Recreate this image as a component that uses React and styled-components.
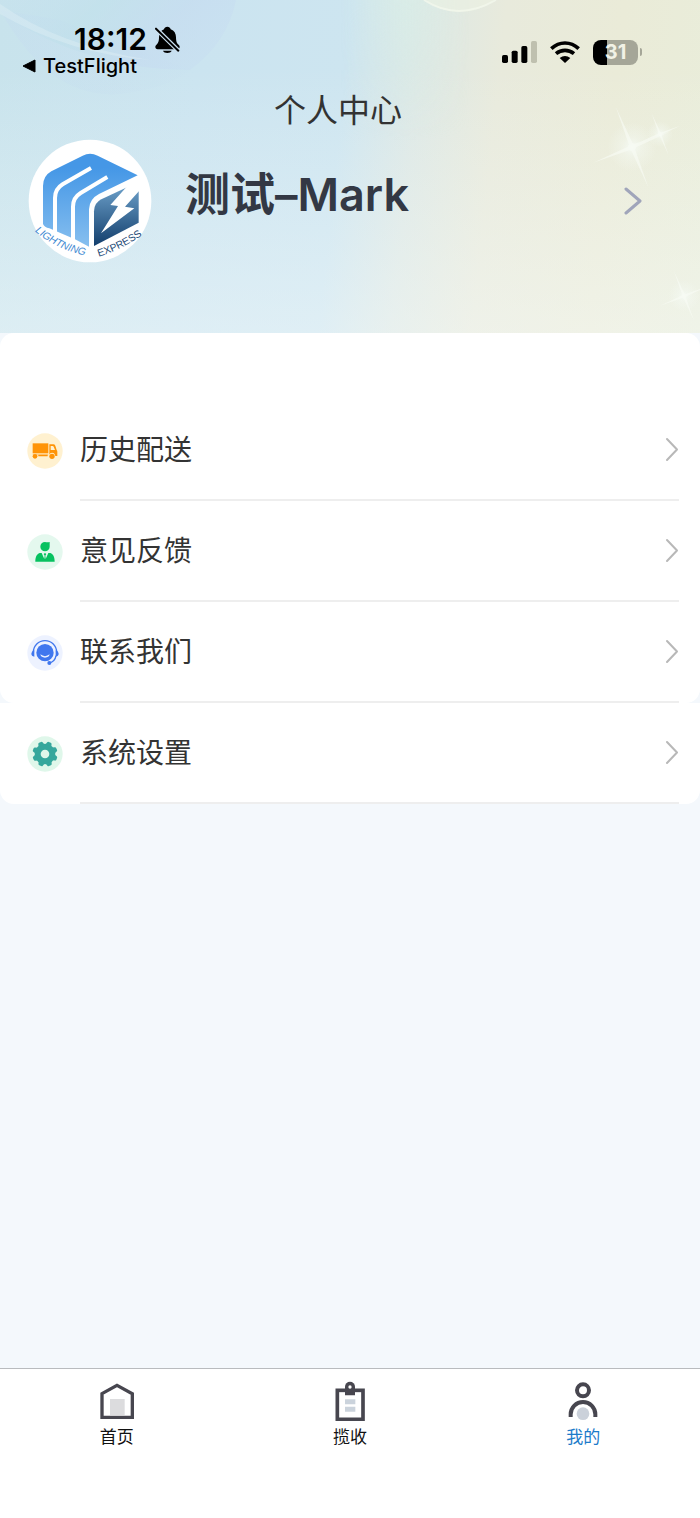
import React from "react";
import styled, { createGlobalStyle } from "styled-components";

const GlobalStyle = createGlobalStyle`
  * { box-sizing: border-box; }
  body {
    margin: 0;
    font-family: Inter, "Noto Sans CJK SC", sans-serif;
    background: #f4f8fc;
  }
  a { color: inherit; text-decoration: none; }
  svg { display: block; flex: none; }
`;

const Page = styled.div`
  min-height: 100vh;
  display: flex;
  flex-direction: column;
`;

const Header = styled.header`
  position: relative;
  overflow: hidden;
  padding: 24px 0 70px;
  background:
    linear-gradient(180deg, rgba(255, 255, 255, 0) 20%, rgba(248, 252, 252, 0.42) 100%),
    linear-gradient(96deg, #c8e3ec 0%, #cbe4f0 28%, #cde5f0 48%, #dde8e5 58%, #e8eadc 69%, #eaebd8 85%, #e9edda 100%);
`;

const Backdrop = styled.svg`
  position: absolute;
  top: 0;
  left: 0;
  width: 100%;
  height: 100%;
`;

const StatusBar = styled.div`
  position: relative;
  display: flex;
  justify-content: space-between;
  padding: 0 58px 0 22px;
  color: #000;
`;

const TimeRow = styled.div`
  display: flex;
  align-items: center;
  gap: 8px;
  height: 30px;
  padding-left: 52px;
  font-size: 30px;
  font-weight: 600;
  line-height: 30px;
`;

const BackLink = styled.a`
  display: flex;
  align-items: center;
  gap: 7px;
  height: 24px;
  font-size: 20px;
  font-weight: 500;
  line-height: 24px;
`;

const StatusIcons = styled.div`
  display: flex;
  align-items: center;
  gap: 13px;
  height: 56px;
`;

const BatteryWrap = styled.div`
  display: flex;
  align-items: center;
  gap: 2px;
`;

const Battery = styled.div`
  width: 45px;
  height: 25px;
  border-radius: 8px;
  background: linear-gradient(90deg, #000 14px, #a5a698 14px);
  color: #f1f2e6;
  font-size: 20px;
  font-weight: 700;
  line-height: 25px;
  text-align: center;
`;

const BatteryNub = styled.span`
  width: 2px;
  height: 8px;
  border-radius: 0 2px 2px 0;
  background: #a5a698;
`;

const Title = styled.h1`
  position: relative;
  margin: 9px 24px 6px 0;
  font-size: 32px;
  font-weight: 400;
  line-height: 44px;
  text-align: center;
  color: #333;
`;

const Profile = styled.a`
  position: relative;
  display: flex;
  align-items: center;
  padding: 0 58px 0 28px;
`;

const Name = styled.span`
  flex: 1;
  margin-left: 33px;
  padding-bottom: 12px;
  font-size: 45px;
  font-weight: 600;
  line-height: 56px;
  color: #333844;
`;

const Card = styled.nav`
  padding-top: ${(p) => p.$top}px;
  background: #fff;
  border-radius: ${(p) => (p.$top ? "14px" : "0 0 14px 14px")};
`;

const Row = styled.a`
  display: flex;
  align-items: center;
  gap: 17px;
  height: 101px;
  padding: 0 21px 0 27px;
`;

const RowBody = styled.span`
  flex: 1;
  display: flex;
  align-items: center;
  justify-content: space-between;
  height: 100%;
  border-bottom: 2px solid #eee;
  font-size: 28px;
  line-height: 40px;
  color: #333;
`;

const TabBar = styled.nav`
  display: flex;
  height: 150px;
  margin-top: auto;
  padding-top: 11px;
  border-top: 1px solid #b9bbbe;
  background: #fff;
`;

const Tab = styled.a`
  flex: 1;
  display: flex;
  flex-direction: column;
  align-items: center;
  gap: 4px;
  font-size: 17px;
  line-height: 24px;
  color: ${(p) => (p.$active ? "#1c7bca" : "#111")};
`;

const BellOff = () => (
  <svg width="25" height="27" viewBox="0 0 75 81" aria-hidden="true">
    <path d="M37 2c5 0 9 3 10 8 11 4 16 13 16 24 0 14 3 19 9 24 4 4 2 12-5 12H8c-7 0-9-8-5-12 6-6 9-11 9-24C12 23 17 14 27 10c1-5 5-8 10-8z" />
    <path d="M24 74h26c-3 9-23 9-26 0z" />
    <path d="M3 8l67 66" stroke="#cbe0f0" strokeWidth="13" />
    <path d="M3 8l67 66" stroke="#000" strokeWidth="6" strokeLinecap="round" />
  </svg>
);

const Signal = () => (
  <svg width="35" height="22" viewBox="0 0 105 66" aria-hidden="true">
    <rect x="0" y="42" width="18" height="24" rx="5" />
    <rect x="29" y="29" width="18" height="37" rx="5" />
    <rect x="58" y="15" width="18" height="51" rx="5" />
    <rect x="87" y="0" width="18" height="66" rx="5" fill="#bfc0af" />
  </svg>
);

const Wifi = () => (
  <svg width="30" height="22" viewBox="0 0 90 66" aria-hidden="true">
    <g fill="none" stroke="#000" strokeWidth="11">
      <path d="M4 23Q22 6 45 6t41 17" />
      <path d="M18 38Q30 28 45 28t27 10" />
    </g>
    <path d="M29 51q16-12 32 0L45 66z" />
  </svg>
);

const Chevron = ({ width, height, color, stroke }) => (
  <svg width={width} height={height} viewBox={`0 0 ${width} ${height}`} fill="none" aria-hidden="true">
    <path
      d={`M2 2L${width - 2} ${height / 2}L2 ${height - 2}`}
      stroke={color}
      strokeWidth={stroke}
      strokeLinecap="round"
      strokeLinejoin="round"
    />
  </svg>
);

const Star = ({ x, y, size }) => (
  <g transform={`translate(${x} ${y}) rotate(-22) scale(${size})`}>
    <circle r="26" fill="url(#glow)" />
    <path
      d="M0-46L2-4L4-2L44 0L4 2L2 4L0 46L-2 4L-4 2L-44 0L-4-2L-2-4z"
      fill="#f8fcf5"
      opacity="0.6"
    />
  </g>
);

const Scenery = () => (
  <Backdrop viewBox="0 0 700 333" preserveAspectRatio="none" aria-hidden="true">
    <defs>
      <radialGradient id="glow">
        <stop offset="0" stopColor="#f5faf4" stopOpacity="0.9" />
        <stop offset="0.4" stopColor="#f5faf4" stopOpacity="0.4" />
        <stop offset="1" stopColor="#f5faf4" stopOpacity="0" />
      </radialGradient>
      <linearGradient id="bubble" x1="0" x2="1" y1="0" y2="0.3">
        <stop offset="0" stopColor="#c3dff0" stopOpacity="0.2" />
        <stop offset="0.4" stopColor="#bfe0ea" stopOpacity="0.8" />
        <stop offset="0.75" stopColor="#c5dbf0" stopOpacity="0.9" />
        <stop offset="1" stopColor="#c6dcf1" stopOpacity="0.6" />
      </linearGradient>
      <linearGradient id="lens" x1="0" x2="1" y1="0" y2="0">
        <stop offset="0" stopColor="#c4dbf0" stopOpacity="0.6" />
        <stop offset="1" stopColor="#c4dbf0" stopOpacity="0.1" />
      </linearGradient>
      <linearGradient id="mint" x1="0" x2="1" y1="0" y2="0">
        <stop offset="0" stopColor="#d9efe6" stopOpacity="0" />
        <stop offset="0.5" stopColor="#d9efe6" stopOpacity="0.6" />
        <stop offset="1" stopColor="#d9efe6" stopOpacity="0" />
      </linearGradient>
      <linearGradient id="fade" x1="0" x2="0" y1="0" y2="1">
        <stop offset="0" stopColor="#fff" />
        <stop offset="1" stopColor="#000" />
      </linearGradient>
      <mask id="fadeMask">
        <rect width="700" height="140" fill="url(#fade)" />
      </mask>
    </defs>
    <rect x="340" width="130" height="140" fill="url(#mint)" mask="url(#fadeMask)" />
    <path d="M0 10Q50 100 120 94Q170 88 190 70L60 20z" fill="url(#lens)" opacity="0.6" />
    <path d="M0 0H236Q228 42 190 70Q90 70 0 14z" fill="url(#bubble)" opacity="0.7" />
    <path d="M0 4Q60 46 150 60Q70 54 0 14z" fill="#e0eff6" opacity="0.4" />
    <ellipse cx="460" cy="-18" rx="42" ry="30" fill="#edf2e2" opacity="0.6" />
    <path d="M424 0Q458 22 496 0" fill="none" stroke="#f2f7ec" strokeWidth="2" opacity="0.8" />
    <Star x={632} y={147} size={0.95} />
    <Star x={660} y={134} size={0.5} />
    <Star x={684} y={296} size={0.6} />
  </Backdrop>
);

const Avatar = () => (
  <svg width="124" height="124" viewBox="24 25 372 372" role="img" aria-label="Lightning Express">
    <defs>
      <linearGradient id="cube" x1="0" x2="0" y1="0" y2="1">
        <stop offset="0.15" stopColor="#4597e6" />
        <stop offset="1" stopColor="#86bfef" />
      </linearGradient>
      <linearGradient id="face" x1="0" x2="0" y1="0" y2="1">
        <stop offset="0" stopColor="#6fa3cc" />
        <stop offset="1" stopColor="#123e6c" />
      </linearGradient>
      <path id="arcLeft" d="M44 302Q110 359 220 380" />
      <path id="arcRight" d="M236 378Q310 356 386 300" />
    </defs>
    <circle cx="210" cy="211" r="184" fill="#fff" />
    <path
      d="M69 280V166Q69 136 94 122L188 75Q210 64 233 75L353 134L237 190Q208 205 207 236V348L165 326L88 293Q73 290 69 280z"
      fill="url(#cube)"
    />
    <path d="M105 310V202Q105 175 128 161L213 112" fill="none" stroke="#fff" strokeWidth="12" />
    <path d="M159 334V228Q159 201 182 187L262 139" fill="none" stroke="#fff" strokeWidth="12" />
    <path d="M222 346V242Q222 217 244 206L318 171L356 160V276z" fill="url(#face)" />
    <path d="M320 168L271 223L294 226L243 308L343 233L315 228L362 176V150z" fill="#fff" />
    <g fontFamily="'Liberation Sans', sans-serif" fontSize="31">
      <text fill="#3f8ad2" fontStyle="italic">
        <textPath href="#arcLeft">LIGHTNING</textPath>
      </text>
      <text fill="#1f4d78">
        <textPath href="#arcRight">EXPRESS</textPath>
      </text>
    </g>
  </svg>
);

const Badge = ({ tint, children }) => (
  <svg width="36" height="36" viewBox="0 0 108 108" aria-hidden="true">
    <circle cx="54" cy="54" r="53" fill={tint} />
    {children}
  </svg>
);

const TruckIcon = () => (
  <Badge tint="#fff1d0">
    <g fill="#ff9407">
      <rect x="17" y="31" width="47" height="30" />
      <path d="M17 64h47v3H17z" opacity="0.5" />
      <rect x="34" y="65" width="28" height="5" rx="1" />
      <circle cx="24" cy="70" r="7" />
      <circle cx="75" cy="70" r="8" />
      <path
        fillRule="evenodd"
        d="M67 34h12q4 0 6 4l4 13q2 2 2 5v13h-6q-2-10-10-10-6 0-8 6zM71 39v12h13l-4-10q-1-2-3-2z"
      />
    </g>
  </Badge>
);

const PersonIcon = () => (
  <Badge tint="#e4f8ee">
    <g fill="#07c160">
      <path d="M68 24v14a14 14 0 1 1-14-14q8 2 14 0z" />
      <path d="M25 83c0-13 4-23 13-26h6l8 18 1-10-3-5 4-3 4 3-3 5 1 10 8-18h6c9 3 13 13 13 26z" />
    </g>
  </Badge>
);

const SupportIcon = () => (
  <Badge tint="#edf2ff">
    <circle cx="54" cy="53" r="26" fill="#4077ee" />
    <path d="M40 58q14 11 28 0-2 10-14 10t-14-10z" fill="#edf2ff" />
    <path d="M19 52a35 35 0 0 1 70 0" fill="none" stroke="#4077ee" strokeWidth="4" />
    <path d="M22 46v19q-9-2-9-9t9-10zM86 46v19q9-2 9-9t-9-10z" fill="#4077ee" />
    <path d="M87 62q-3 18-20 22" fill="none" stroke="#4077ee" strokeWidth="4" />
    <circle cx="67" cy="84" r="6" fill="#4077ee" />
  </Badge>
);

const GearIcon = () => (
  <Badge tint="#dff7ea">
    <g fill="#35a79c">
      <circle cx="54" cy="54" r="31" />
      {[0, 1, 2, 3, 4, 5, 6, 7].map((n) => (
        <path
          key={n}
          d="M44 28l3-9q1-3 4-3h6q3 0 4 3l3 9z"
          transform={`rotate(${n * 45 + 22} 54 54)`}
        />
      ))}
    </g>
    <circle cx="54" cy="54" r="13" fill="#dff7ea" />
  </Badge>
);

const HomeIcon = () => (
  <svg width="36" height="41" viewBox="0 0 108 123" aria-hidden="true">
    <rect x="33" y="57" width="44" height="48" fill="#dcdcde" />
    <path d="M9 41L54 16L100 41V112H9z" fill="none" stroke="#47464f" strokeWidth="10" />
  </svg>
);

const ClipboardIcon = () => (
  <svg width="36" height="41" viewBox="0 0 108 123" aria-hidden="true">
    <rect x="16" y="31" width="77" height="87" fill="none" stroke="#47464f" strokeWidth="11" />
    <path d="M39 46V20a15 15 0 0 1 30 0v26z" fill="#47464f" />
    <circle cx="54" cy="21" r="5" fill="#fff" />
    <path d="M39 58h31v15H39zM39 80h31v15H39z" fill="#cbd3dc" />
  </svg>
);

const MineIcon = () => (
  <svg width="36" height="41" viewBox="0 0 108 123" aria-hidden="true">
    <circle cx="54" cy="101" r="19" fill="#cbd1da" />
    <g fill="none" stroke="#47464f" strokeWidth="12">
      <circle cx="54" cy="31" r="18" />
      <path d="M17 111v-8a37 37 0 0 1 74 0v8" />
    </g>
  </svg>
);

const MenuRow = ({ icon, label }) => (
  <Row href="#">
    {icon}
    <RowBody>
      {label}
      <Chevron width={14} height={25} color="#b8b8b8" stroke={2} />
    </RowBody>
  </Row>
);

export default function App() {
  return (
    <Page>
      <GlobalStyle />
      <Header>
        <Scenery />
        <StatusBar>
          <div>
            <TimeRow>
              18:12
              <BellOff />
            </TimeRow>
            <BackLink href="#">
              <svg width="14" height="14" viewBox="0 0 14 14" aria-hidden="true">
                <path d="M1 7L13 1V13z" stroke="#000" strokeLinejoin="round" />
              </svg>
              TestFlight
            </BackLink>
          </div>
          <StatusIcons>
            <Signal />
            <Wifi />
            <BatteryWrap>
              <Battery>31</Battery>
              <BatteryNub />
            </BatteryWrap>
          </StatusIcons>
        </StatusBar>
        <Title>个人中心</Title>
        <Profile href="#">
          <Avatar />
          <Name>测试–Mark</Name>
          <Chevron width={18} height={28} color="#a0a5ba" stroke={3} />
        </Profile>
      </Header>
      <main>
        <Card $top={67}>
          <MenuRow icon={<TruckIcon />} label="历史配送" />
          <MenuRow icon={<PersonIcon />} label="意见反馈" />
          <MenuRow icon={<SupportIcon />} label="联系我们" />
        </Card>
        <Card $top={0}>
          <MenuRow icon={<GearIcon />} label="系统设置" />
        </Card>
      </main>
      <TabBar>
        <Tab href="#">
          <HomeIcon />
          首页
        </Tab>
        <Tab href="#">
          <ClipboardIcon />
          揽收
        </Tab>
        <Tab href="#" $active aria-current="page">
          <MineIcon />
          我的
        </Tab>
      </TabBar>
    </Page>
  );
}
